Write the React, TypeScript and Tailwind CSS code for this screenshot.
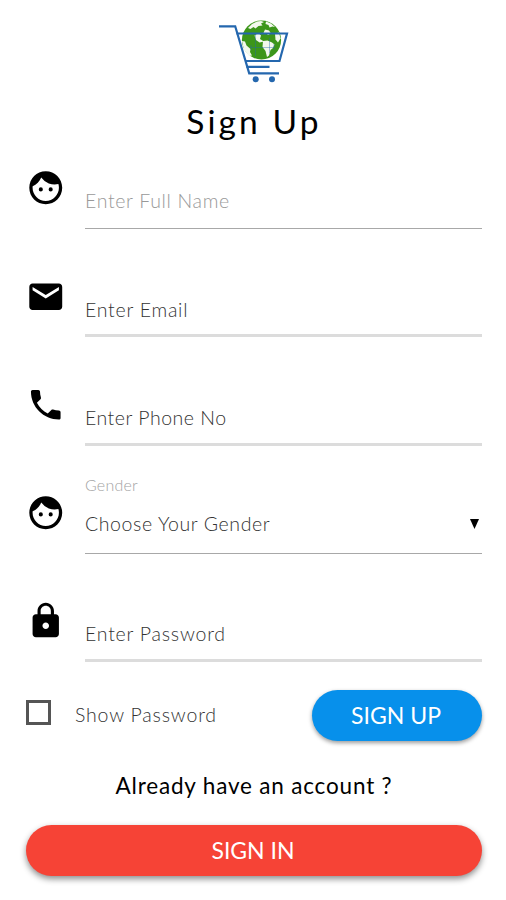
import type { ReactNode } from 'react';
import { MdEmail, MdFace, MdLock, MdPhone } from 'react-icons/md';

function Logo() {
    return (
        <svg width="74" height="66" viewBox="217 18 74 66" fill="none">
            <defs>
                <clipPath id="globe">
                    <path d="M240 18h44v42h-44z" />
                </clipPath>
            </defs>
            <g clipPath="url(#globe)">
                <circle cx="261.5" cy="40" r="19.6" fill="#3c961a" />
                <g fill="#f3f8ee">
                    <path d="M248 28l4-4 5-2.500 4-.5 3 1-3 1.500 1.500 2-4 .5-3 2.500-2-1.500-3 2z" />
                    <path d="M266 21.500l5 2 4 3.500-2.500-.5-3 1-1-2.500-3-1z" />
                    <path d="M265 29.500l4 1 2 3-3 1.500-2-2-3 1z" />
                    <path d="M254.500 35.500l4-2.500 2.500 2.500-1 3.500 4 2.500-4.500 1-3.500-2.500z" />
                    <path d="M263 41l4.500-.5 4.500 2 2.500 2-1.500 3.500-2.500 2-1.500 5.500-2 1.500-1.500-6-3-4z" />
                    <path d="M242 41l3 .5 1.500 4 4 3.500-.5 3 2 3.500-3 .5-5-6z" />
                    <path d="M275 33.500l4-1 1.500 6-2.500 4-2.500-3z" />
                </g>
            </g>
            <path d="M255.500 35v21M269.500 38v15M251 45v5M274 44v6M250.500 47.500h24" stroke="#2467ae" strokeWidth="1" opacity=".4" />
            <path d="M219 26.300h16.200l14 47h29.800" stroke="#2467ae" strokeWidth="2.200" />
            <path d="M236.500 33.500h50.500L279.500 61h-34M246.500 66.800h23" stroke="#2467ae" strokeWidth="2.200" />
            <circle cx="255.700" cy="79.300" r="3" fill="#2467ae" />
            <circle cx="272" cy="79.300" r="3" fill="#2467ae" />
        </svg>
    );
}

type FieldProps = {
    icon: ReactNode;
    label?: string;
    className: string;
    children: ReactNode;
};

function Field({ icon, label, className, children }: FieldProps) {
    return (
        <div className="flex h-[108.250px] items-start">
            <div className="-ml-[0.500px] mr-[19.500px] w-10 shrink-0 text-black">{icon}</div>
            <div className={`flex flex-1 flex-col justify-end whitespace-nowrap text-[19.500px] font-light ${className}`}>
                {label && <span className="mb-[17px] text-[16px] leading-5 tracking-[0.200px] text-[#a3a3a3]">{label}</span>}
                {children}
            </div>
        </div>
    );
}

export default function App() {
    return (
        <div className="flex h-[900px] w-[506px] flex-col overflow-hidden bg-white pr-6 pl-[26px] font-['Lato','Open_Sans',sans-serif] text-black">
            <header className="flex flex-col items-center pt-[18px]">
                <Logo />
                <h1 className="mt-[17px] text-[33.500px] leading-10 tracking-[3.100px]">Sign Up</h1>
            </header>

            <main className="mt-[27px]">
                <Field icon={<MdFace size={39.5} />} className="h-[61px] border-b-[1.500px] border-[#a8a8a8] pb-[15px] leading-6 text-[#999999]">
                    <span className="tracking-[0.680px]">Enter Full Name</span>
                </Field>
                <Field icon={<MdEmail size={39.5} className="relative top-px" />} className="h-[61px] border-b-[3px] border-[#dcdcdc] pb-[12px] leading-6 text-[#333333]">
                    <span className="tracking-[0.760px]">Enter Email</span>
                </Field>
                <Field icon={<MdPhone size={39.5} />} className="h-[61px] border-b-[3px] border-[#dcdcdc] pb-[13px] leading-6 text-[#333333]">
                    <span className="tracking-[0.520px]">Enter Phone No</span>
                </Field>
                <Field icon={<MdFace size={39.5} />} label="Gender" className="-mt-[18px] h-[79px] border-b-[1.500px] border-[#a8a8a8] pb-[17px] leading-6 text-[#333333]">
                    <span className="flex items-center justify-between">
                        <span className="tracking-[0.600px]">Choose Your Gender</span>
                        <svg width="9" height="10" viewBox="0 0 9 10" className="mr-[3px]">
                            <path d="M0 0h9L4.500 10z" fill="#000" />
                        </svg>
                    </span>
                </Field>
                <Field icon={<MdLock size={39.5} />} className="h-[61px] border-b-[3px] border-[#dcdcdc] pb-[13px] leading-6 text-[#333333]">
                    <span className="tracking-[0.780px]">Enter Password</span>
                </Field>
            </main>

            <div className="-mt-[20px] flex h-[52px] items-center">
                <span className="mb-[5px] h-[25px] w-[25px] border-[3px] border-[#555555]" />
                <span className="ml-[24px] text-[19.500px] leading-6 font-light tracking-[0.820px] text-[#333333]">Show Password</span>
                <button className="ml-auto h-[51px] w-[170px] rounded-full bg-[#0790eb] pr-[2px] text-[23px] leading-6 text-white shadow-[0_2px_4px_rgba(0,0,0,0.4)]">
                    <span>SIGN UP</span>
                </button>
            </div>

            <p className="mt-[31px] text-center text-[22.500px] leading-7 tracking-[0.820px]">
                <span>Already have an account ?</span>
            </p>
            <button className="mt-[25px] h-[51px] w-full shrink-0 rounded-full bg-[#f64336] pr-[2px] pb-px text-[23px] leading-6 text-white shadow-[0_3px_6px_rgba(0,0,0,0.45)]">
                <span>SIGN IN</span>
            </button>
        </div>
    );
}
